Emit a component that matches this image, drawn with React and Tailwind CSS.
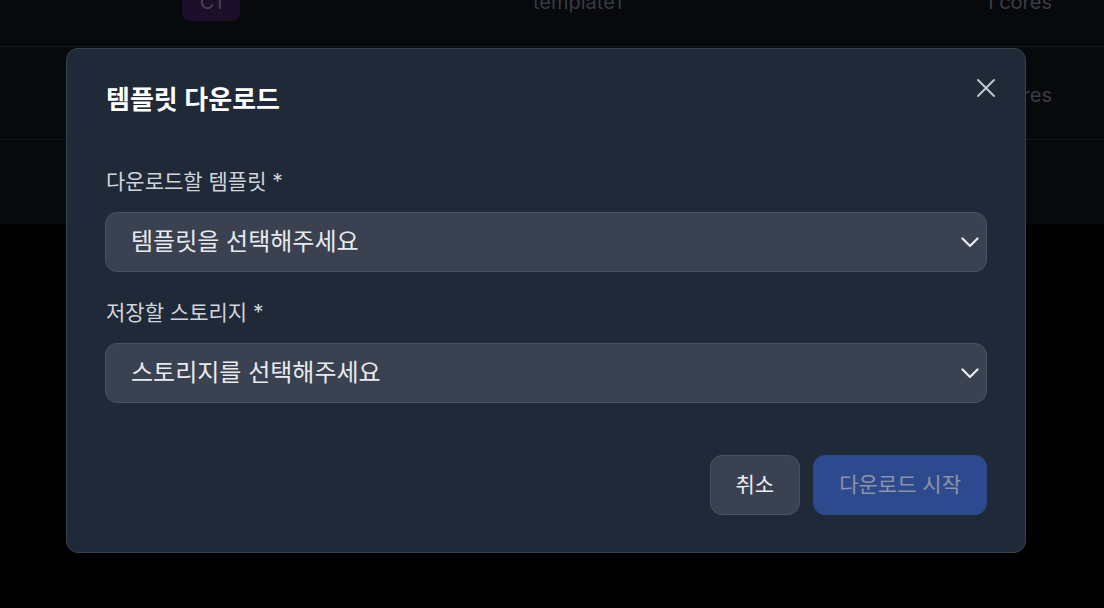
import { X } from "lucide-react";

const rows = [
    { id: "C1", name: "template1", cores: "1 cores" },
    { id: null, name: null, cores: "1 cores" },
];

const Chevron = () => (
    <svg width="18" height="11" viewBox="0 0 18 11" fill="none" className="text-[#eceef1]">
        <polyline points="1.5,1.5 9,9 16.5,1.5" stroke="currentColor" strokeWidth="2.2" strokeLinecap="round" strokeLinejoin="round" />
    </svg>
);

const SelectBox = ({ placeholder }) => (
    <div className="flex items-center justify-between h-[60px] pl-[25px] pr-[7px] bg-[#3a4150] border border-[#4a5262] rounded-xl">
        <span className="text-[24px] leading-[30px] text-[#e8eaed]">{placeholder}</span>
        <Chevron />
    </div>
);

const App = () => {
    return (
        <div
            className="relative w-full h-[608px] overflow-hidden bg-black"
            style={{ fontFamily: '"Inter", "Noto Sans CJK KR", "Noto Sans", sans-serif' }}
        >
            {/* table behind the modal */}
            <div className="bg-[#08090d] -mt-[46px]">
                {rows.map((row, i) => (
                    <div key={i} className="flex items-center h-[93px] pl-[182px] pr-[52px] pt-[3px] border-b border-[#15171c]">
                        {row.id && (
                            <span className="flex items-center justify-center w-[58px] h-[38px] rounded-lg bg-[#1c0f2a] text-[20px] text-[#4a4152]">
                                {row.id}
                            </span>
                        )}
                        {row.name && <span className="ml-[293px] text-[20px] text-[#373a41]">{row.name}</span>}
                        <span className="ml-auto text-[20px] text-[#3a3d44]">{row.cores}</span>
                    </div>
                ))}
                <div className="h-[84px]"></div>
            </div>

            {/* modal */}
            <div className="absolute inset-0 flex items-start pl-[66px] pt-[48px]">
                <div className="relative w-[960px] bg-[#1f2937] border border-[#374151] rounded-xl px-[38px] pt-[35px] pb-[37px]">
                    <button className="absolute right-[23px] top-[23px] text-[#c4c8cf]">
                        <X size={32} strokeWidth={1.4} />
                    </button>
                    <h2 className="pl-px text-[26px] leading-[32px] font-semibold text-white">템플릿 다운로드</h2>

                    <div className="mt-[52px]">
                        <label className="block pl-px mb-4 text-[21px] leading-[28px] text-[#d1d5db]">다운로드할 템플릿 *</label>
                        <SelectBox placeholder="템플릿을 선택해주세요" />
                    </div>

                    <div className="mt-[27px]">
                        <label className="block pl-px mb-4 text-[21px] leading-[28px] text-[#d1d5db]">저장할 스토리지 *</label>
                        <SelectBox placeholder="스토리지를 선택해주세요" />
                    </div>

                    <div className="flex justify-end gap-[13px] mt-[52px]">
                        <button className="h-[60px] px-[25px] bg-[#3a4150] border border-[#4a5262] rounded-xl text-[21px] text-[#eceef1]">
                            취소
                        </button>
                        <button className="h-[60px] px-[25px] bg-[#2e4a8e] border border-[#2e4a8e] rounded-xl text-[21px] text-[#8c94a5]">
                            다운로드 시작
                        </button>
                    </div>
                </div>
            </div>
        </div>
    );
};

export default App;
